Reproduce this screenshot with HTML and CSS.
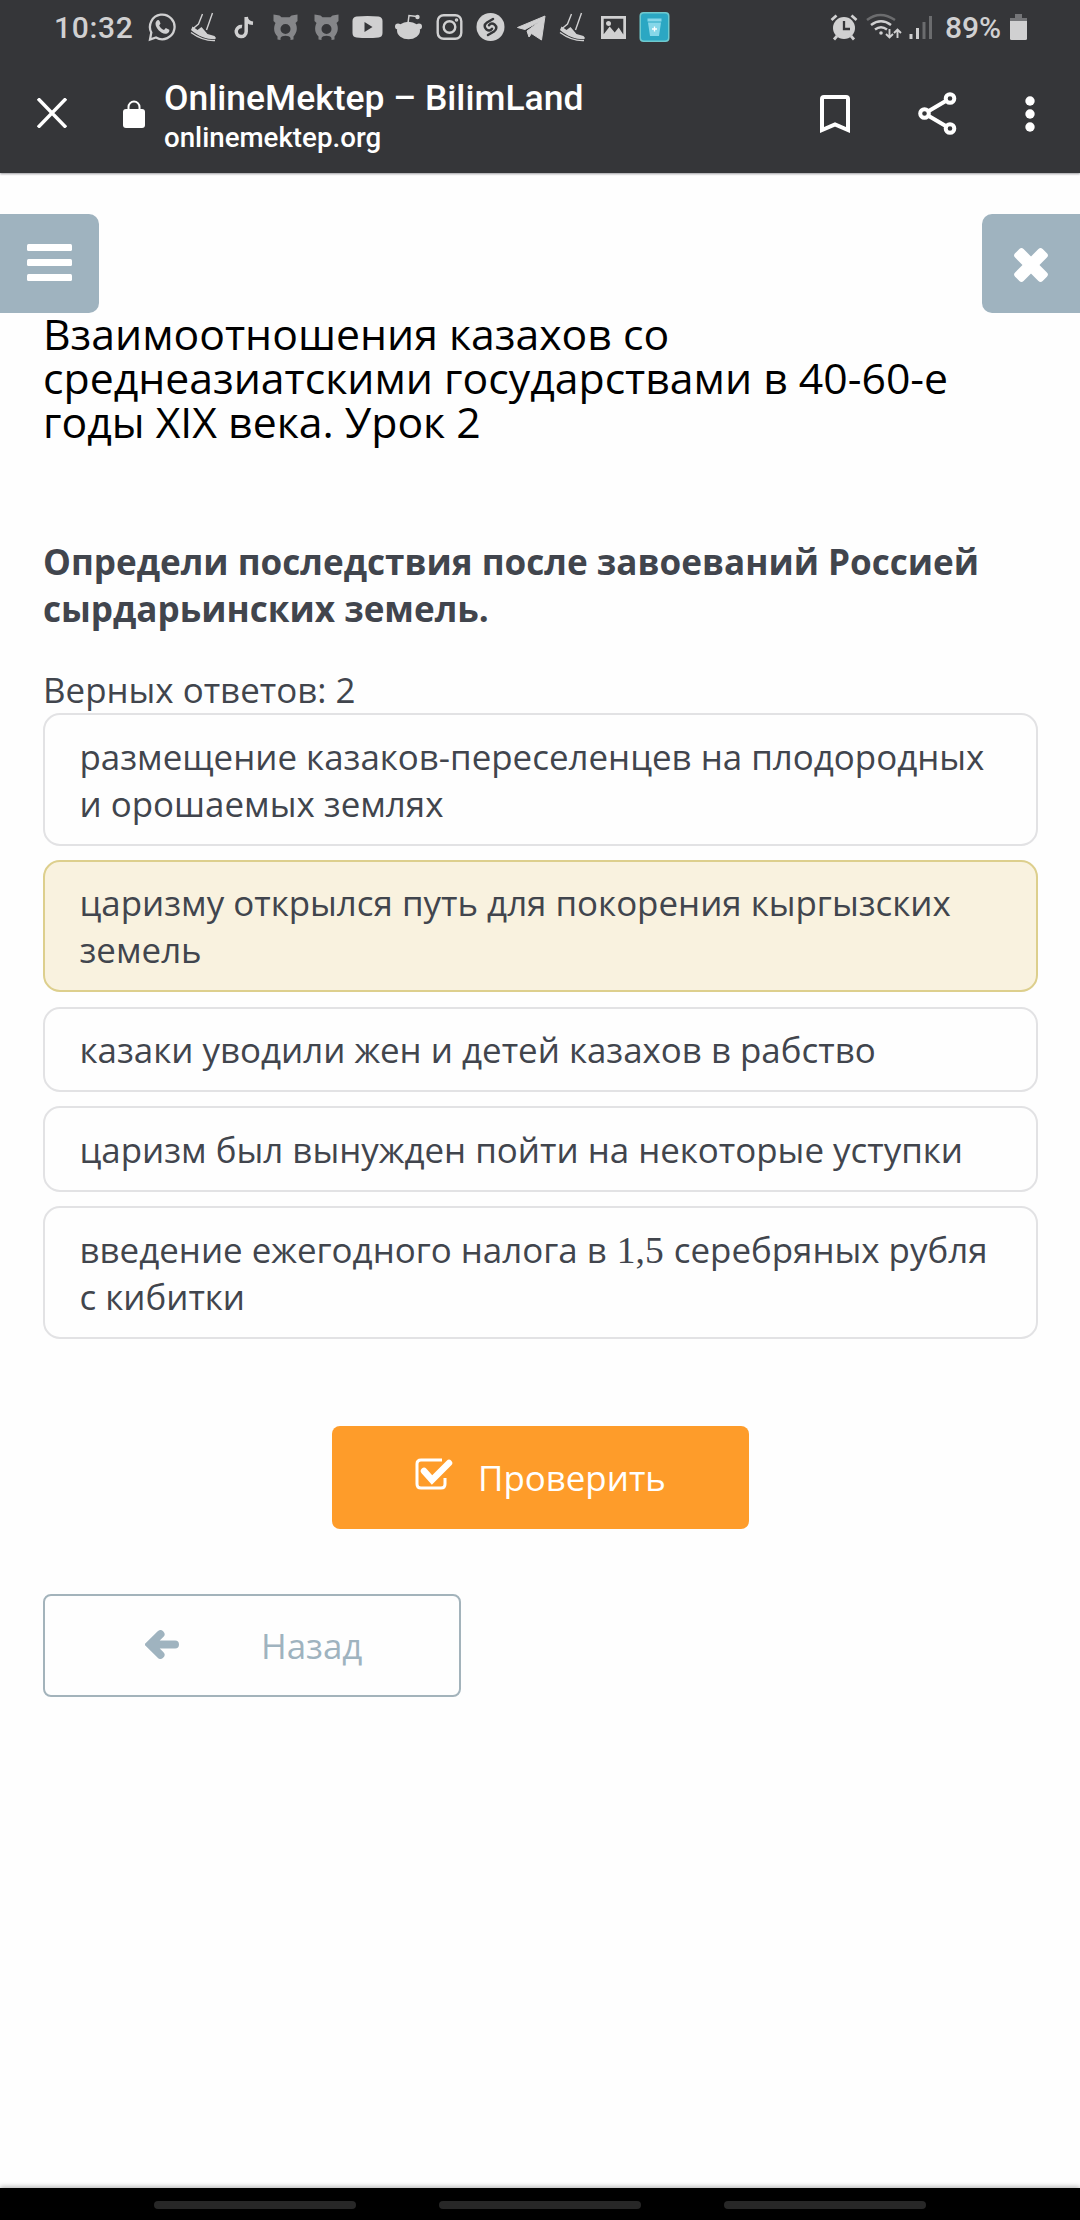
FILE: index.html
```html
<!DOCTYPE html>
<html lang="ru">
<head>
<meta charset="utf-8">
<title>OnlineMektep – BilimLand</title>
<link rel="stylesheet" href="styles.css">
</head>
<body>
<svg class="sprite" aria-hidden="true">
  <symbol id="shoe" viewBox="0 0 28 30">
    <path d="M13 2 9 12 3 17M23 1 17 18" fill="none" stroke="currentColor" stroke-width="1.4"/>
    <path d="M3 14.500 8 18l4-3 6 7 7 2 1.500 2-1 1.200C18 27.500 9 24.500 1.500 18z" fill="currentColor"/>
    <path d="M1.500 20.500C9 26 16 29 25.500 28.600" fill="none" stroke="currentColor" stroke-width="1.400"/>
  </symbol>
  <symbol id="bear" viewBox="0 0 28 30">
    <path d="M2 2.500 8 3.500 10 5.300h8l2-1.800 6-1v6.500l-2 2c2.300 4.500 1.600 9.500-2 13.500v3l-3 .5v-2c-1-3-9-3-10 0v2l-3-.5v-3C2.300 21 1.700 15.500 4 11L2 9zM14 12a5 5 0 1 0 0 10 5 5 0 0 0 0-10z" fill="currentColor" fill-rule="evenodd"/>
  </symbol>
</svg>

<header class="browser">
  <div class="status">
    <span class="clock">10:32</span>
    <div class="notices">
      <svg class="ic" viewBox="0 0 30 30"><path d="M3.800 20.500A12.300 12.300 0 1 1 8.500 25.500L2.500 27.500z" fill="none" stroke="currentColor" stroke-width="2.300"/><path d="M9 9c1-1.500 2.300-1.500 3 0l1 2.500-1.300 2c1 2 2.600 3.500 4.800 4.500l1.800-1.900 3.500 1.700c.5 2-1.300 4-4 4-4.600 0-10-6-9.800-10.200 0-1 .3-1.900 1-2.600z" fill="currentColor"/></svg>
      <svg class="ic" viewBox="0 0 28 30"><use href="#shoe"/></svg>
      <svg class="ic" viewBox="0 0 30 30"><path d="M16.700 5v14.500a5 5 0 1 1-4.200-4.900M16.700 5c.3 4 3 6 6.800 6.300" fill="none" stroke="currentColor" stroke-width="3.500"/></svg>
      <svg class="ic dim" viewBox="0 0 28 30"><use href="#bear"/></svg>
      <svg class="ic dim" viewBox="0 0 28 30"><use href="#bear"/></svg>
      <svg class="ic" viewBox="0 0 30 30"><path d="M4 4.500Q15 3.500 26 4.500 30 5 30 9v12q0 4-4 4.500-11 1-22 0Q0 25 0 21V9q0-4 4-4.500zM12 10v10l8-5z" fill="currentColor" fill-rule="evenodd"/></svg>
      <svg class="ic" viewBox="0 0 30 30"><ellipse cx="15" cy="18.500" rx="11.500" ry="8.800" fill="currentColor"/><circle cx="4.500" cy="14.500" r="3" fill="currentColor"/><circle cx="25.500" cy="14.500" r="3" fill="currentColor"/><path d="m14.500 11 1-7.500 8 1" fill="none" stroke="currentColor" stroke-width="1.500"/><circle cx="24" cy="5" r="2.200" fill="currentColor"/></svg>
      <svg class="ic" viewBox="0 0 30 30" fill="none" stroke="currentColor" stroke-width="2.400"><rect x="3.200" y="3.200" width="23.600" height="23.600" rx="6"/><circle cx="15" cy="15" r="5.800"/><circle cx="22" cy="8" r="1" stroke-width="1.500"/></svg>
      <svg class="ic" viewBox="0 0 30 30"><circle cx="15" cy="15" r="14" fill="currentColor"/><path d="m17.500 7-6 3.500c-3 2-3 5-.5 7 2 1.500 4 1.200 5.500-.7M12.500 23l6-3.500c3-2 3-5 .5-7-2-1.500-4-1.200-5.500.7" fill="none" stroke="#353639" stroke-width="2.500" stroke-linecap="round"/></svg>
      <svg class="ic" viewBox="0 0 30 30"><path d="M1 15.500 28.500 4 25 28 15 21.500 12.500 25 10.500 19 23 9.500 8.500 17.500z" fill="currentColor" stroke="currentColor" stroke-linejoin="round"/></svg>
      <svg class="ic" viewBox="0 0 28 30"><use href="#shoe"/></svg>
      <svg class="ic" viewBox="0 0 30 30"><path d="M2.500 4h25v23h-25zm2.700 2.700v15.500l6-7.700 5 6 4-5 4.600 7V6.700zM10 9a2.500 2.500 0 1 1 0 5 2.500 2.500 0 0 1 0-5z" fill="currentColor" fill-rule="evenodd"/></svg>
      <svg class="ic" viewBox="0 0 30 30"><rect width="30" height="30" rx="4" fill="#6fc9ce"/><rect x="1.500" y="1.500" width="27" height="27" rx="3" fill="#2ba7c3"/><path d="M8 6.500h14v3H8zM8.500 10.500h13L19.500 24h-9z" fill="#86d7e9"/><path d="M12.500 17h5M15 14.500v5" stroke="#fff" stroke-width="1.300"/></svg>
    </div>
    <div class="system">
      <svg class="alarm" viewBox="0 0 28 28"><circle cx="14" cy="15" r="11" fill="currentColor"/><path d="m1.500 7 5-4.500M26.500 7l-5-4.500M7 23l-3 3.500M21 23l3 3.500" stroke="currentColor" stroke-width="2.800"/><path d="M14 8v8h6" fill="none" stroke="#353639" stroke-width="2.300"/></svg>
      <svg class="wifi" viewBox="0 0 36 28" fill="none" stroke="currentColor" stroke-width="2.500"><path d="M1 7q13-10 28 0" opacity=".35"/><path d="M5 12q10-7.500 20 0M9 16.500q6-4.500 12 0"/><circle cx="15" cy="20" r="1.800" fill="currentColor" stroke="none"/><path d="M23.500 16v8M20 21l3.500 3.500L27 21M31.500 25v-8M28 20l3.500-3.500L35 20" stroke-width="1.900"/></svg>
      <svg class="signal" viewBox="0 0 24 28" fill="none" stroke="currentColor" stroke-width="3"><path d="M2 21v5M8.500 15v11"/><path d="M15 9v17M21.500 3v23" opacity=".35"/></svg>
      <span class="charge">89%</span>
      <svg class="battery" viewBox="0 0 17 26"><path d="M0 4h5V0h7v4h5v3H0z" fill="#747578"/><path d="M0 7h17v17.500q0 1.500-1.500 1.500h-14Q0 26 0 24.500z" fill="currentColor"/></svg>
    </div>
  </div>
  <div class="toolbar">
    <svg class="quit" viewBox="0 0 30 30"><path d="m1 0.500 28 29M29 .5l-28 29" stroke="#fff" stroke-width="3.400"/></svg>
    <svg class="lock" viewBox="0 0 22 28"><rect y="9" width="22" height="19" rx="3" fill="#fff"/><path d="M5.500 10V7a5.500 5.500 0 0 1 11 0v3" fill="none" stroke="#fff" stroke-width="2"/></svg>
    <div class="site">
      <div class="site-name">OnlineMektep – BilimLand</div>
      <div class="site-host">onlinemektep.org</div>
    </div>
    <svg class="bookmark" viewBox="0 0 30 38"><path d="M2 35V4q0-2 2-2h22q2 0 2 2v31l-13-5.500z" fill="none" stroke="#fff" stroke-width="4"/></svg>
    <svg class="share" viewBox="0 0 39 43" fill="none" stroke="#fff" stroke-width="4"><path d="M32 6.500 6.500 21.500 32 36.500"/><g fill="#353639"><circle cx="32" cy="6.500" r="4.300"/><circle cx="6.500" cy="21.500" r="4.300"/><circle cx="32" cy="36.500" r="4.300"/></g></svg>
    <svg class="more" viewBox="0 0 10 36" fill="#fff"><circle cx="5" cy="5" r="4.700"/><circle cx="5" cy="18" r="4.700"/><circle cx="5" cy="31" r="4.700"/></svg>
  </div>
</header>

<main class="page">
  <nav class="corner">
    <button class="tab tab-menu" aria-label="Меню"><svg class="burger" viewBox="0 0 45 38" fill="#fff"><rect width="45" height="7" rx="1.500"/><rect y="15" width="45" height="7" rx="1.500"/><rect y="30" width="45" height="7" rx="1.500"/></svg></button>
    <button class="tab tab-close" aria-label="Закрыть"><svg class="cross" viewBox="0 0 36 36" fill="#fff"><rect x="-1.500" y="12" width="39" height="12" rx="3" transform="rotate(45 18 18)"/><rect x="-1.500" y="12" width="39" height="12" rx="3" transform="rotate(-45 18 18)"/></svg></button>
  </nav>

  <div class="content">
    <h1 class="lesson">Взаимоотношения казахов со среднеазиатскими государствами в 40-60-е годы XIX века. Урок 2</h1>
    <p class="question">Определи последствия после завоеваний Россией сырдарьинских земель.</p>
    <p class="hint">Верных ответов: 2</p>
    <ul class="answers">
      <li class="answer">размещение казаков-переселенцев на плодородных и орошаемых землях</li>
      <li class="answer answer-picked">царизму открылся путь для покорения кыргызских земель</li>
      <li class="answer">казаки уводили жен и детей казахов в рабство</li>
      <li class="answer">царизм был вынужден пойти на некоторые уступки</li>
      <li class="answer">введение ежегодного налога в <span class="math">1,5</span> серебряных рубля с кибитки</li>
    </ul>
    <button class="btn check"><svg class="tick" viewBox="0 0 38 32"><path d="M27 2H6Q2 2 2 6v20q0 4 4 4h20q4 0 4-4v-6" fill="none" stroke="#fff" stroke-width="3"/><path d="m9 13 8 9L34 5" fill="none" stroke="#fff" stroke-width="6.500" stroke-linecap="round"/></svg><span>Проверить</span></button>
    <button class="btn back"><svg class="arrow" viewBox="0 0 34 29"><path d="M30 14.500H8M15.500 4.200 5 14.500l10.500 10.300" fill="none" stroke="currentColor" stroke-width="8" stroke-linecap="round" stroke-linejoin="miter"/></svg><span>Назад</span></button>
  </div>
</main>

<footer class="keys"><i class="key"></i><i class="key"></i><i class="key"></i></footer>
</body>
</html>
```
FILE: styles.css
```css
* { box-sizing: border-box; }
body {
  margin: 0;
  height: 2220px;
  display: flex;
  flex-direction: column;
  background: #fefefe;
  font-family: "Open Sans", "Noto Sans", sans-serif;
  color: #41454d;
  overflow: hidden;
}
svg { display: block; flex: none; }
button { font: inherit; padding: 0; border: 0; }
.sprite { display: none; }

.browser {
  flex: none;
  height: 173px;
  background: #353639;
  color: #fff;
  font-family: Roboto, sans-serif;
  box-shadow: 0 1px 2px #9b9a9f;
}
.status {
  height: 54px;
  display: flex;
  align-items: center;
  padding-left: 54px;
  padding-right: 53px;
  color: #d0d0d1;
}
.clock {
  width: 87.500px;
  font-size: 30px;
  font-weight: 500;
  letter-spacing: .7px;
}
.notices { display: flex; }
.notices .ic { width: 41px; height: 30px; }
.notices .dim { color: #858689; }
.system { margin-left: auto; display: flex; align-items: center; }
.alarm { width: 28px; height: 28px; margin-right: 8px; }
.wifi { width: 36px; height: 28px; margin-right: 7px; }
.signal { width: 24px; height: 28px; margin-right: 12px; }
.charge { width: 65px; font-size: 30px; font-weight: 500; letter-spacing: 0; }
.battery { width: 17px; height: 26px; }

.toolbar {
  height: 119px;
  display: flex;
  align-items: center;
  padding: 0 45px 0 37px;
}
.quit { width: 30px; height: 30px; margin: -1px 56px 0 0; }
.lock { width: 22px; height: 28px; margin-right: 19px; }
.site { flex: 1; padding-top: 5px; white-space: nowrap; }
.site-name { font-size: 35.500px; line-height: 44px; font-weight: 500; }
.site-host { font-size: 27.700px; line-height: 36px; font-weight: 500; }
.bookmark { width: 30px; height: 38px; margin-right: 68px; }
.share { width: 39px; height: 43px; margin-right: 68px; }
.more { width: 10px; height: 36px; }

.page { flex: 1; padding-top: 41px; }
.corner { display: flex; justify-content: space-between; }
.tab {
  width: 99px;
  height: 99px;
  display: flex;
  align-items: center;
  background: #9fb3bf;
}
.tab-menu { border-radius: 0 10px 10px 0; padding-left: 27px; }
.tab-close { width: 98px; border-radius: 10px 0 0 10px; padding-left: 31px; }
.burger { width: 45px; height: 38px; margin-top: -1px; }
.cross { width: 36px; height: 36px; margin-top: 2px; }

.content {
  display: flex;
  flex-direction: column;
  margin-top: -1px;
  padding: 0 42px 0 43px;
  font-size: 34.900px;
  line-height: 47px;
}
.lesson { margin: 0 0 94px; font-size: 42.750px; line-height: 44px; font-weight: 400; color: #000; }
.question { margin: 0 0 34px; font-size: 35.100px; font-weight: 700; }
.hint { margin: 0; }
.answers {
  list-style: none;
  margin: 0 0 87px;
  padding: 0;
  display: flex;
  flex-direction: column;
  gap: 14.300px;
}
.answer {
  padding: 17.500px 33px 17px 34.500px;
  border: 2px solid #e2e2e4;
  border-radius: 17px;
}
.answer-picked { background: #f9f2df; border-color: #ddcf8d; }
.math { margin: 0 1px; font-family: "Liberation Serif", serif; font-size: 37.500px; line-height: 1; }
.btn {
  width: 417px;
  height: 103px;
  border-radius: 8px;
  display: flex;
  align-items: center;
}
.check { align-self: center; background: #fe9c2a; color: #fff; padding-left: 83px; }
.tick { width: 38px; height: 32px; margin: -6px 25px 0 0; }
.back {
  margin-top: 65px;
  width: 418px;
  padding-left: 100px;
  background: none;
  border: 2px solid #a3b3bb;
  color: #9fb3bf;
}
.arrow { width: 34px; height: 29px; margin: -1px 82px 0 0; }

.keys {
  flex: none;
  height: 32px;
  display: flex;
  justify-content: center;
  gap: 83px;
  padding-top: 13px;
  background: #000;
  box-shadow: 0 -1px 5px #aaa;
}
.key { width: 202px; height: 8px; border-radius: 4px; background: #272727; }
```
